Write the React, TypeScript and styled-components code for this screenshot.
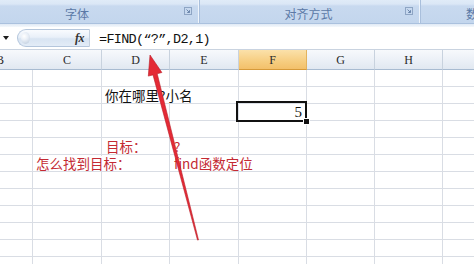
import React from 'react';
import styled, { createGlobalStyle } from 'styled-components';

const Global = createGlobalStyle`
  html, body { margin: 0; padding: 0; background: #fff; overflow: hidden; }
  #root { width: 474px; height: 264px; }
`;

const Page = styled.div`
  position: relative;
  width: 474px;
  height: 264px;
  overflow: hidden;
  background: #fff;
  font-family: "Noto Sans CJK SC", sans-serif;
`;

const Ribbon = styled.div`
  height: 24px;
  display: flex;
  background: linear-gradient(#e0ebf8 0, #dbe7f6 4px, #c8d9ef 6px, #c3d6ed 100%);
  border-bottom: 1px solid #aac1de;
  box-sizing: border-box;
`;

const Group = styled.div<{ $w: number }>`
  width: ${(p) => p.$w}px;
  flex: none;
  display: flex;
  align-items: center;
  box-sizing: border-box;
  border-right: 1px solid #a9bfdc;
  box-shadow: inset -1px 0 0 #eef4fb;
  padding-top: 3px;
`;

const GroupLabel = styled.div<{ $pl: number; $pr?: number; $align?: string }>`
  flex: 1;
  text-align: ${(p) => p.$align || 'center'};
  padding-left: ${(p) => p.$pl}px;
  padding-right: ${(p) => p.$pr ?? 0}px;
  font-size: 12px;
  line-height: 17px;
  color: #5b79a6;
  white-space: nowrap;
`;

const Launcher = styled.svg`
  flex: none;
  width: 8px;
  height: 8px;
  margin-right: 7px;
  margin-top: -4px;
`;

const Band = styled.div`
  height: 3px;
  background: linear-gradient(#dfe9f5, #f4f8fc);
`;

const FormulaBar = styled.div`
  height: 23px;
  display: flex;
  align-items: center;
  background: #fff;
  border-bottom: 1px solid #c9d3e0;
  box-sizing: border-box;
`;

const NameArrow = styled.div`
  width: 17px;
  flex: none;
  display: flex;
  justify-content: flex-start;
  padding-left: 3px;
  box-sizing: border-box;
  &::before {
    content: '';
    border-left: 3.5px solid transparent;
    border-right: 3.5px solid transparent;
    border-top: 4px solid #1c1c1c;
  }
`;

const Capsule = styled.div`
  width: 73px;
  height: 18px;
  flex: none;
  box-sizing: border-box;
  border: 1px solid #b4c6dc;
  border-radius: 9px 0 0 9px;
  border-right-color: #c4d0de;
  background: linear-gradient(#f9fbfe 0%, #e9f0f9 45%, #d8e4f2 55%, #e3ecf7 100%);
  display: flex;
  align-items: center;
  justify-content: space-between;
  padding: 0 5px 0 3px;
`;

const Knob = styled.div`
  width: 9px;
  height: 12px;
  border-radius: 50%;
  background: radial-gradient(circle at 35% 35%, #ffffff 0, #e8eef6 40%, #b9c8da 100%);
`;

const Fx = styled.span`
  font-family: "Liberation Serif", serif;
  font-style: italic;
  font-weight: bold;
  font-size: 12px;
  color: #333;
  letter-spacing: -0.5px;
`;

const FormulaText = styled.div`
  padding-left: 9px;
  font-family: "Liberation Mono", monospace;
  font-size: 13.5px;
  letter-spacing: -0.7px;
  color: #111;
  white-space: nowrap;
  padding-top: 2px;
`;

const Sheet = styled.div<{ $cols: string }>`
  display: grid;
  grid-template-columns: ${(p) => p.$cols};
`;

const HeaderCell = styled.div<{ $active?: boolean; $shift?: number }>`
  height: 20px;
  box-sizing: border-box;
  border-right: 1px solid ${(p) => (p.$active ? '#e3b35e' : '#c8d2de')};
  border-bottom: 1px solid ${(p) => (p.$active ? '#d69a3a' : '#a8bbd1')};
  background: ${(p) =>
    p.$active
      ? 'linear-gradient(#fbe1aa, #f6cd80 60%, #f3c06a)'
      : 'linear-gradient(#f7f9fc, #eaeff6 60%, #e1e8f1)'};
  display: flex;
  align-items: center;
  justify-content: center;
  font-family: "Liberation Serif", serif;
  font-size: 12px;
  color: #2a2a2a;
  padding-top: 2px;
  padding-right: ${(p) => p.$shift ?? 0}px;
  overflow: hidden;
`;

const Cell = styled.div<{ $align?: string }>`
  position: relative;
  height: 17px;
  box-sizing: border-box;
  border-right: 1px solid #d9dde4;
  border-bottom: 1px solid #d9dde4;
  display: flex;
  align-items: center;
  justify-content: ${(p) => (p.$align === 'right' ? 'flex-end' : 'flex-start')};
`;

const CellText = styled.span<{ $red?: boolean; $serif?: boolean; $pl?: number }>`
  position: relative;
  z-index: 1;
  background: #fff;
  white-space: nowrap;
  font-family: ${(p) => (p.$serif ? '"Liberation Serif", serif' : '"Noto Sans CJK SC", sans-serif')};
  font-size: ${(p) => (p.$serif ? '15px' : '13.5px')};
  line-height: 15px;
  color: ${(p) => (p.$red ? '#c42a33' : '#111')};
  padding-left: ${(p) => p.$pl ?? 3}px;
  padding-right: ${(p) => (p.$serif ? 4 : 0)}px;
`;

const Selection = styled.div`
  position: absolute;
  left: -3px;
  top: -3px;
  right: -1px;
  bottom: -2px;
  border: 2.5px solid #111;
  z-index: 2;
  pointer-events: none;
  &::after {
    content: '';
    position: absolute;
    right: -5px;
    bottom: -5px;
    width: 5px;
    height: 5px;
    background: #111;
    border: 1px solid #fff;
  }
`;

const Overlay = styled.svg`
  position: absolute;
  left: 0;
  top: 0;
  z-index: 5;
  pointer-events: none;
`;

const colWidths = [33, 69, 68, 69, 68, 68, 68, 40];
const letters = ['B', 'C', 'D', 'E', 'F', 'G', 'H', ''];

type CellDef = { text: string; red?: boolean; serif?: boolean; align?: string; pl?: number; sel?: boolean };
const cells: Record<string, CellDef> = {
  '1-2': { text: '你在哪里?小名', pl: 3 },
  '2-4': { text: '5', serif: true, align: 'right', sel: true },
  '4-2': { text: '目标：', red: true, pl: 4 },
  '4-3': { text: '?', red: true, pl: 4 },
  '5-1': { text: '怎么找到目标：', red: true, pl: 3 },
  '5-3': { text: 'find函数定位', red: true, pl: 4 },
};

const Launch = () => (
  <Launcher viewBox="0 0 8 8">
    <rect x="0.5" y="0.5" width="7" height="7" fill="none" stroke="#8ea5c4" strokeWidth="1" />
    <path d="M2.5 2.5 L5.5 5.5 M5.5 3.2 L5.5 5.5 L3.2 5.5" fill="none" stroke="#6c87ad" strokeWidth="1" />
  </Launcher>
);

export default function App() {
  const rows = Array.from({ length: 12 }, (_, r) => r);
  return (
    <Page>
      <Global />
      <Ribbon>
        <Group $w={200}>
          <GroupLabel $pl={0} $pr={30}>字体</GroupLabel>
          <Launch />
        </Group>
        <Group $w={221}>
          <GroupLabel $pl={12}>对齐方式</GroupLabel>
          <Launch />
        </Group>
        <Group $w={60}>
          <GroupLabel $pl={45} $align="left">数字</GroupLabel>
        </Group>
      </Ribbon>
      <Band />
      <FormulaBar>
        <NameArrow />
        <Capsule>
          <Knob />
          <Fx>fx</Fx>
        </Capsule>
        <FormulaText>=FIND(“?”,D2,1)</FormulaText>
      </FormulaBar>
      <Sheet $cols={colWidths.map((w) => `${w}px`).join(' ')}>
        {letters.map((l, i) => (
          <HeaderCell key={`h${i}`} $active={l === 'F'} $shift={i === 0 ? 34 : 0}>
            {l}
          </HeaderCell>
        ))}
        {rows.map((r) =>
          colWidths.map((_, c) => {
            const d = cells[`${r}-${c}`];
            return (
              <Cell key={`${r}-${c}`} $align={d?.align}>
                {d && (
                  <CellText $red={d.red} $serif={d.serif} $pl={d.pl}>
                    {d.text}
                  </CellText>
                )}
                {d?.sel && <Selection />}
              </Cell>
            );
          })
        )}
      </Sheet>
      <Overlay width="474" height="264" viewBox="0 0 474 264">
        <polygon
          points="150,55 161.9,72.5 157.2,73.7 198.5,239.9 197.5,240.1 153,74.9 148.3,76.1"
          fill="#e42a35"
          stroke="#b81d27"
          strokeWidth="0.6"
          strokeLinejoin="round"
        />
      </Overlay>
    </Page>
  );
}
